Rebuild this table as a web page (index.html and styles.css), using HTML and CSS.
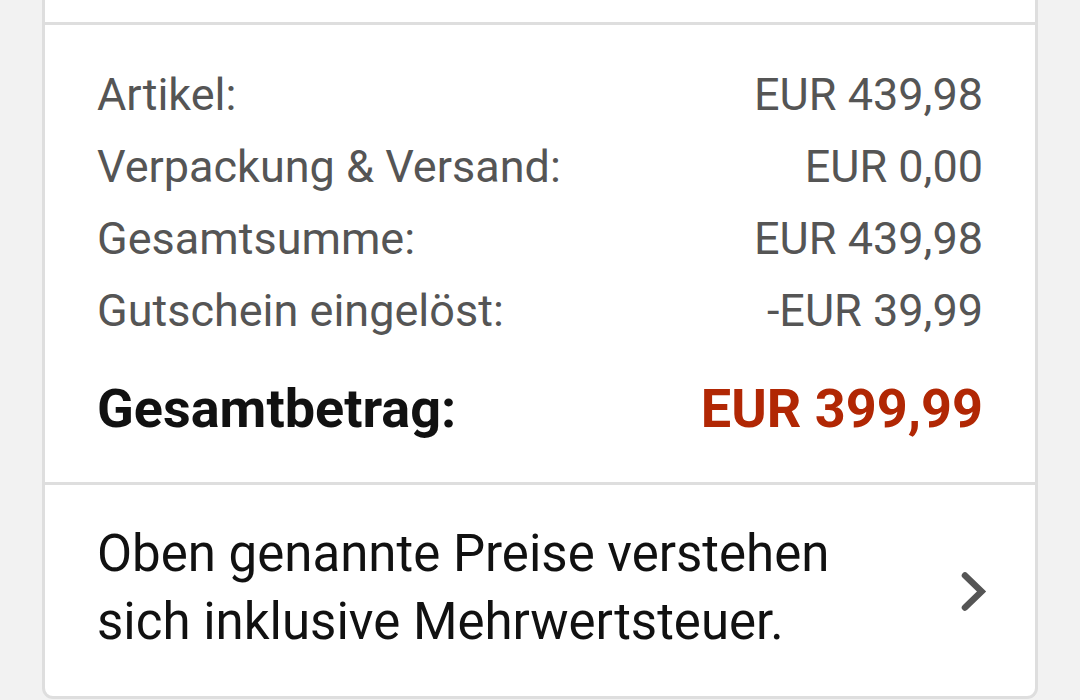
FILE: index.html
```html
<!DOCTYPE html>
<html lang="de">
<head>
<meta charset="utf-8">
<title>Bestellübersicht</title>
<link rel="stylesheet" href="styles.css">
</head>
<body>
<div class="card">
  <div class="top-strip"></div>
  <div class="summary">
    <div class="row"><span>Artikel:</span><span>EUR 439,98</span></div>
    <div class="row"><span>Verpackung &amp; Versand:</span><span>EUR 0,00</span></div>
    <div class="row"><span>Gesamtsumme:</span><span>EUR 439,98</span></div>
    <div class="row"><span>Gutschein eingelöst:</span><span>-EUR 39,99</span></div>
    <div class="row total"><span>Gesamtbetrag:</span><span class="price">EUR 399,99</span></div>
  </div>
  <div class="footer">
    <p class="note">Oben genannte Preise verstehen<br>sich inklusive Mehrwertsteuer.</p>
    <svg class="chevron" width="26" height="39" viewBox="0 0 26 39" aria-hidden="true">
      <path d="M4 3.5 L20.5 19.5 L4 35.5" fill="none" stroke="#555" stroke-width="6.5" stroke-linecap="round" stroke-linejoin="miter"/>
    </svg>
  </div>
</div>
</body>
</html>
```
FILE: styles.css
```css
html, body {
  margin: 0;
  padding: 0;
}
body {
  background: #f2f2f2;
  font-family: Roboto, "Noto Sans", sans-serif;
  width: 1080px;
  height: 700px;
  overflow: hidden;
}
.card {
  margin-left: 42px;
  width: 990px;
  background: #fff;
  border: 3px solid #dedede;
  border-top: none;
  border-radius: 0 0 11px 11px;
}
.top-strip {
  height: 22px;
  border-bottom: 3px solid #dedede;
}
.summary {
  padding: 34px 52px 33px 52px;
  border-bottom: 3px solid #dedede;
}
.row {
  display: flex;
  justify-content: space-between;
  font-size: 45px;
  line-height: 72px;
  color: #555;
}
.row.total {
  margin-top: 22px;
  font-weight: 700;
  font-size: 54px;
  line-height: 80px;
  color: #111;
}
.row.total .price {
  color: #b12704;
}
.footer {
  display: flex;
  align-items: center;
  justify-content: space-between;
  padding: 35px 48px 40px 52px;
}
.note {
  margin: 0;
  font-size: 51px;
  line-height: 68px;
  color: #111;
}
.chevron {
  display: block;
  margin-top: 7px;
}
```
